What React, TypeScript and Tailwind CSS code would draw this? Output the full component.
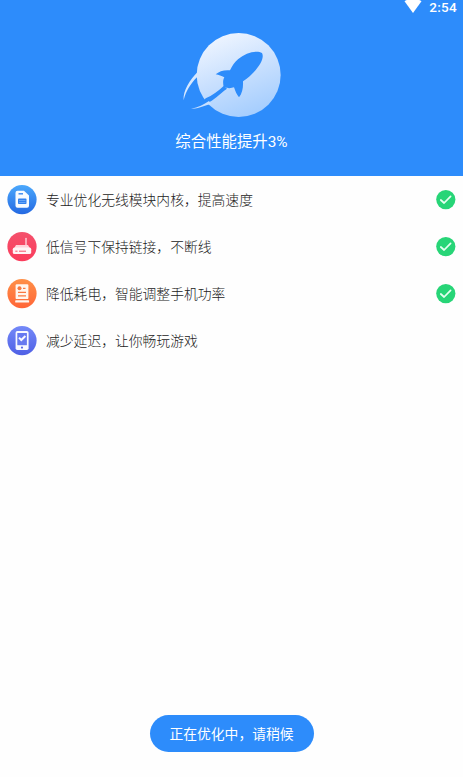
import type { ReactNode } from 'react';

interface Task {
  label: string;
  icon: ReactNode;
  done: boolean;
}

function Rocket() {
  return (
    <svg viewBox="0 0 390 330" className="h-[110px] w-[130px]" aria-hidden="true">
      <defs>
        <linearGradient id="moon" x1="0.25" y1="0" x2="0.65" y2="1">
          <stop offset="0" stopColor="#f0f6ff" />
          <stop offset="0.5" stopColor="#c9e0fe" />
          <stop offset="1" stopColor="#a4cdfe" />
        </linearGradient>
      </defs>
      <circle cx="203" cy="165" r="126" fill="url(#moon)" />
      <path d="M80 156C57 179 35 212 38 241C44 215 59 190 78 172Z" fill="#d6e8ff" />
      {/* exhaust cut through the disc, then the light trail under it */}
      <path d="M72 257C90 252 98 243 104 235C124 227 141 213 158 198L168 206C144 223 130 240 108 250Z" fill="#2d8cfb" />
      <path d="M60 266C82 263 98 254 114 243L121 253C104 254 84 268 60 266Z" fill="#c9e0fe" />
      <path
        d="M273 99C257 90 224 98 201 118C191 127 184 137 177 151C160 149 144 154 134 163C144 165 151 168 160 172C155 182 156 190 158 201C170 206 181 205 189 202C193 213 197 224 204 232C214 220 217 203 216 184C246 165 285 121 273 99Z"
        fill="#2d8cfb"
      />
    </svg>
  );
}

function SimIcon() {
  return (
    <svg viewBox="0 0 30 30" className="size-[30px] shrink-0" aria-hidden="true">
      <defs>
        <linearGradient id="sim" x1="0" y1="0" x2="0" y2="1">
          <stop offset="0" stopColor="#4ba8fc" />
          <stop offset="1" stopColor="#2469e2" />
        </linearGradient>
      </defs>
      <circle cx="15" cy="14.6" r="14.6" fill="url(#sim)" />
      <path d="M10.5 5.8H17L22 10.6V20.8Q22 22.8 20 22.8H10.5Q8.5 22.8 8.5 20.8V7.8Q8.5 5.8 10.5 5.8Z" fill="#f7fbff" />
      <path d="M11.5 8.8H16" stroke="#3787ef" strokeWidth="1.4" />
      <rect x="11" y="13.6" width="8.5" height="5.4" rx="0.8" fill="#3181ef" />
      <path d="M12 15.5H18.5M12 17.5H18.5" stroke="#9cc7ff" strokeWidth="0.5" />
    </svg>
  );
}

function RouterIcon() {
  return (
    <svg viewBox="0 0 30 30" className="size-[30px] shrink-0" aria-hidden="true">
      <defs>
        <linearGradient id="router" x1="0" y1="0" x2="0" y2="1">
          <stop offset="0" stopColor="#f4516c" />
          <stop offset="1" stopColor="#fb3c5c" />
        </linearGradient>
      </defs>
      <circle cx="15" cy="14.6" r="14.6" fill="url(#router)" />
      <path d="M19 6.5V14" stroke="#ffdce2" strokeWidth="1.3" strokeLinecap="round" />
      <path d="M9 13H21L23.8 18H6.2Z" fill="#ffd3da" />
      <rect x="5.8" y="15.6" width="18.4" height="6.5" rx="1.7" fill="#fff5f6" />
      <path d="M8.3 19.2H10.5M12 19.2H19" stroke="#f5526b" strokeWidth="1" />
    </svg>
  );
}

function BillIcon() {
  return (
    <svg viewBox="0 0 30 30" className="size-[30px] shrink-0" aria-hidden="true">
      <defs>
        <linearGradient id="bill" x1="0" y1="0" x2="0" y2="1">
          <stop offset="0" stopColor="#ff9048" />
          <stop offset="1" stopColor="#ff6537" />
        </linearGradient>
      </defs>
      <circle cx="15" cy="14.6" r="14.6" fill="url(#bill)" />
      <rect x="8.6" y="5.3" width="12.8" height="14.8" rx="1.2" fill="#fff6ef" />
      <circle cx="12.5" cy="9.2" r="2" fill="#fa7840" />
      <path d="M16 9.4H18.5M11 13.4H19M11 16.8H19" stroke="#fa7840" strokeWidth="1.2" />
      <rect x="8.2" y="21.2" width="13.9" height="2.4" rx="0.7" fill="#fff6ef" />
    </svg>
  );
}

function PhoneIcon() {
  return (
    <svg viewBox="0 0 30 30" className="size-[30px] shrink-0" aria-hidden="true">
      <defs>
        <linearGradient id="phone" x1="0" y1="0" x2="0" y2="1">
          <stop offset="0" stopColor="#7489f8" />
          <stop offset="1" stopColor="#4f60e5" />
        </linearGradient>
      </defs>
      <circle cx="15" cy="14.6" r="14.6" fill="url(#phone)" />
      <rect x="8.6" y="5.1" width="13" height="18.8" rx="1.7" fill="#f8f9ff" />
      <rect x="10.3" y="7" width="9.6" height="12.2" fill="#6679f0" />
      <path d="M12 11.6L14.3 14L18.4 10" fill="none" stroke="#f8f9ff" strokeWidth="2" />
      <circle cx="15" cy="21.6" r="1.1" fill="#5768e8" />
    </svg>
  );
}

function DoneMark() {
  return (
    <svg viewBox="0 0 20 20" className="size-5 shrink-0" aria-hidden="true">
      <circle cx="9.8" cy="9.6" r="9.6" fill="#27d577" />
      <path
        d="M4.8 10L8.1 13L14.6 6.3"
        fill="none"
        stroke="#e6fff0"
        strokeWidth="1.7"
        strokeLinecap="round"
        strokeLinejoin="round"
      />
    </svg>
  );
}

const tasks: Task[] = [
  { label: '专业优化无线模块内核，提高速度', icon: <SimIcon />, done: true },
  { label: '低信号下保持链接，不断线', icon: <RouterIcon />, done: true },
  { label: '降低耗电，智能调整手机功率', icon: <BillIcon />, done: true },
  { label: '减少延迟，让你畅玩游戏', icon: <PhoneIcon />, done: false },
];

export default function App() {
  return (
    <div className="flex h-[777px] w-full flex-col overflow-hidden bg-[#fefefe] font-[Roboto,'Noto_Sans_CJK_SC',sans-serif]">
      <header className="flex h-44 shrink-0 flex-col items-center bg-[#2d8cfb] text-white">
        <div className="flex h-5 w-full items-start justify-end gap-[7px] pr-[6px]">
          <svg viewBox="0 0 18 14" className="h-3.5 w-[18px]" aria-hidden="true">
            <path d="M0.5 1.2Q9 -4 17.5 1.2L9 13Z" fill="#fff" />
          </svg>
          <span className="text-[13.5px] leading-[15px] font-medium tracking-[0.3px]">2:54</span>
        </div>
        <div className="flex w-full justify-center pl-[8px]">
          <Rocket />
        </div>
        <h1 className="mt-px text-[15.4px] leading-[22px] font-normal whitespace-nowrap">综合性能提升3%</h1>
      </header>

      <ul className="flex flex-col">
        {tasks.map((task) => (
          <li key={task.label} className="flex h-[47px] items-center px-[7px]">
            {task.icon}
            <span className="ml-[9px] flex-1 text-[13.8px] leading-5 font-light text-[#222222]">{task.label}</span>
            {task.done && <DoneMark />}
          </li>
        ))}
      </ul>

      <footer className="mt-auto flex justify-center pb-[25px]">
        <button
          type="button"
          className="h-[37px] w-[164px] rounded-full bg-[#2d8cfb] pt-px text-[13.8px] text-white"
        >
          正在优化中，请稍候
        </button>
      </footer>
    </div>
  );
}
